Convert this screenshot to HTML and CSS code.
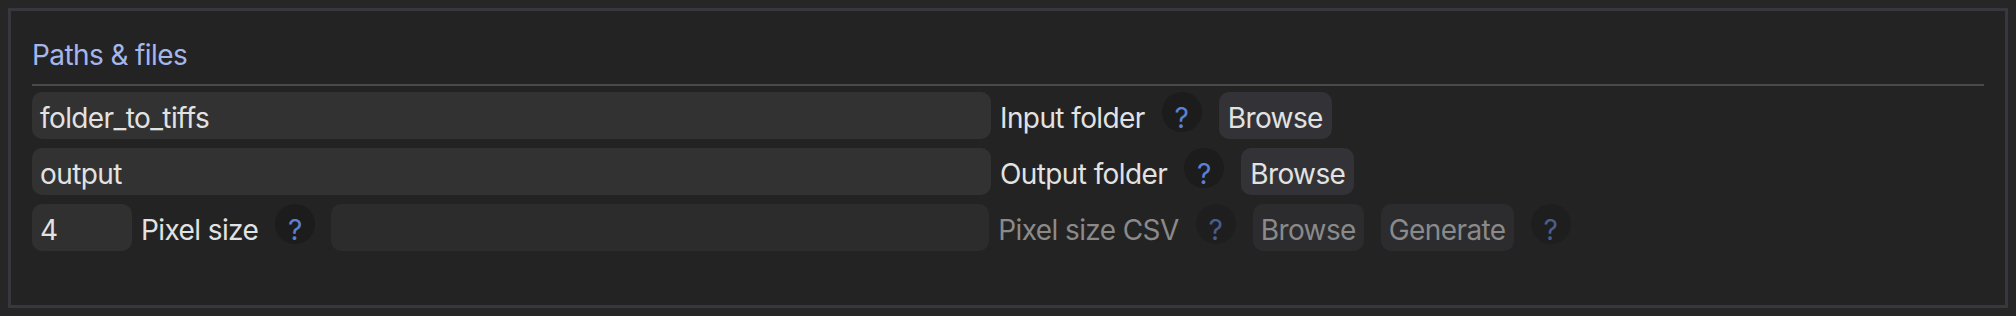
FILE: index.html
```html
<!DOCTYPE html>
<html>
<head>
<meta charset="utf-8">
<link rel="stylesheet" href="styles.css">
</head>
<body>
<div class="panel">
  <div class="title">Paths &amp; files</div>
  <div class="sep"></div>
  <div class="rows">
    <div class="row">
      <div class="field">
        <div class="input wide">folder_to_tiffs</div>
        <span class="label">Input folder</span>
      </div>
      <span class="help">?</span>
      <span class="btn">Browse</span>
    </div>
    <div class="row">
      <div class="field">
        <div class="input wide">output</div>
        <span class="label">Output folder</span>
      </div>
      <span class="help">?</span>
      <span class="btn">Browse</span>
    </div>
    <div class="row">
      <div class="field">
        <div class="input small">4</div>
        <span class="label">Pixel size</span>
      </div>
      <span class="help">?</span>
      <div class="field disabled">
        <div class="input medium"></div>
        <span class="label">Pixel size CSV</span>
      </div>
      <span class="help disabled">?</span>
      <span class="btn disabled">Browse</span>
      <span class="btn disabled">Generate</span>
      <span class="help disabled">?</span>
    </div>
  </div>
</div>
</body>
</html>
```

FILE: styles.css
```css
html, body {
  margin: 0;
  padding: 0;
}
body {
  background: #262626;
  padding: 8px;
  font-family: Inter, "Noto Sans", "Liberation Sans", sans-serif;
  font-size: 28px;
  letter-spacing: -0.6px;
  color: #e2e2e2;
}
.panel {
  box-sizing: border-box;
  width: 2000px;
  height: 300px;
  border: 3px solid #37373e;
  background: #232323;
  padding: 28px 21px 0 21px;
}
.title {
  color: #a4b6ea;
  font-size: 28px;
  line-height: 32px;
  height: 32px;
}
.sep {
  height: 2px;
  background: #4a4a4a;
  margin-top: 13px;
}
.rows {
  margin-top: 6px;
  display: flex;
  flex-direction: column;
  gap: 9px;
}
.row {
  display: flex;
  align-items: flex-start;
  gap: 17px;
  height: 47px;
}
.field {
  display: flex;
  align-items: flex-start;
  gap: 9px;
}
.input, .label, .btn {
  box-sizing: border-box;
  height: 47px;
  padding-top: 5px;
  line-height: 42px;
  white-space: nowrap;
}
.input {
  border-radius: 10px;
  background: #323232;
  padding-left: 8px;
  padding-right: 8px;
}
.input.wide { width: 959px; }
.input.small { width: 100px; background: #303030; }
.input.medium { width: 658px; }
.help {
  box-sizing: border-box;
  width: 40px;
  height: 40px;
  border-radius: 50%;
  background: #1c1c1c;
  color: #5b80d4;
  text-align: center;
  padding-top: 12px;
  line-height: 28px;
  letter-spacing: 0;
}
.btn {
  padding-left: 9px;
  padding-right: 9px;
  border-radius: 10px;
  background: #333337;
}
.field.disabled { margin-left: -1px; }
.field.disabled .input { background: #2c2c2c; }
.field.disabled .label { color: #8a8a8a; }
.help.disabled { color: #4a5e8e; background: #1e1e1e; }
.btn.disabled { color: #8a8a8a; background: #2c2c2e; padding-left: 8px; padding-right: 8px; }
```
